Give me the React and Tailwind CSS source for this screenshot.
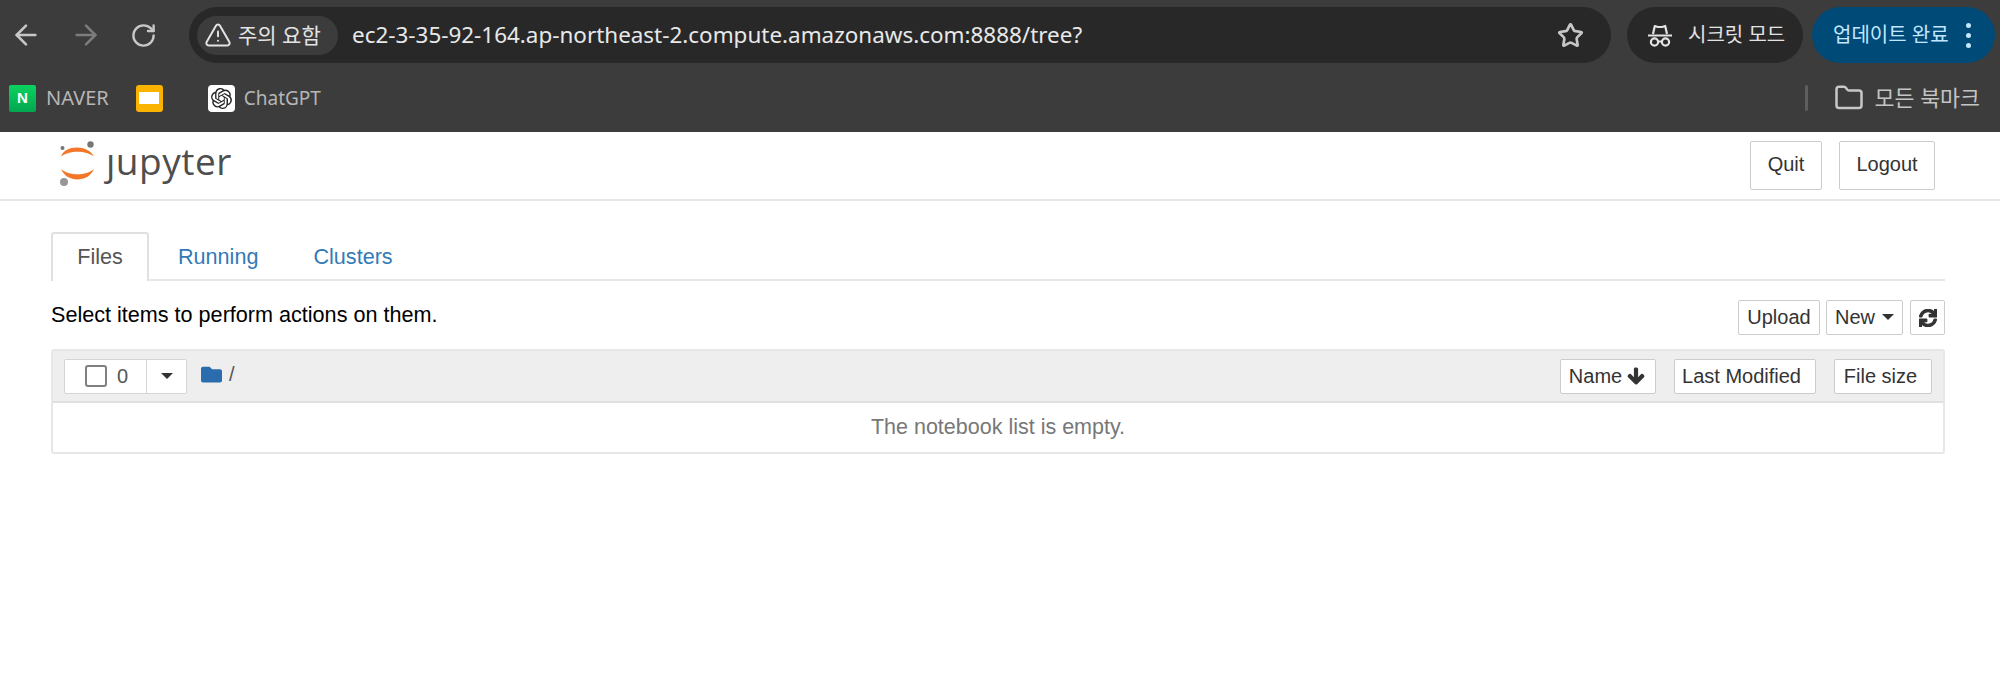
import React from "react";
import { ArrowLeft, ArrowRight, RotateCw, Star, Folder, TriangleAlert } from "lucide-react";
import { FaArrowDown, FaSync, FaFolder } from "react-icons/fa";
import { SiOpenai } from "react-icons/si";

const ui = "font-['Noto_Sans','Noto_Sans_CJK_KR',sans-serif]";
const bs = "font-['Liberation_Sans','Noto_Sans_CJK_KR',sans-serif]";

function Caret({ className = "" }) {
  return <span className={"inline-block w-0 h-0 border-x-[6px] border-x-transparent border-t-[6px] border-t-[#333] " + className} />;
}

function Incognito() {
  return (
    <svg width="26" height="24" viewBox="0 0 26 24" fill="none">
      <path d="M1 11.5h24v2H1z" fill="#e3e3e3" />
      <path d="M6 11 7.8 3l3 1h4.4l3-1L20 11" stroke="#e3e3e3" strokeWidth="2.2" strokeLinejoin="round" />
      <circle cx="7.5" cy="19" r="3.6" stroke="#e3e3e3" strokeWidth="2.2" />
      <circle cx="18.5" cy="19" r="3.6" stroke="#e3e3e3" strokeWidth="2.2" />
      <path d="M11 18.5h4" stroke="#e3e3e3" strokeWidth="2" />
    </svg>
  );
}

function JupyterLogo() {
  return (
    <svg width="38" height="46" viewBox="0 0 38 46" fill="none">
      <path d="M2 16.5C6 4.5 29 4.5 35 16.5C27 10 10 10 2 16.5Z" fill="#f37726" />
      <path d="M2 29C8 43 29 43 35 29C27 36 10 36 2 29Z" fill="#f37726" />
      <circle cx="31.5" cy="4.5" r="3.2" fill="#767677" />
      <circle cx="3.5" cy="8" r="2" fill="#767677" />
      <circle cx="5" cy="42" r="4" fill="#989798" />
    </svg>
  );
}

function Btn({ className = "", children }) {
  return (
    <div className={"flex items-center justify-center bg-white border border-[#ccc] rounded-[2px] text-[#333] " + className}>
      {children}
    </div>
  );
}

export default function App() {
  return (
    <div className="w-[2000px] h-[692px] bg-white overflow-hidden flex flex-col">
      <div className={"h-[132px] bg-[#3c3c3c] flex flex-col shrink-0 " + ui}>
        <div className="h-[70px] flex items-center">
          <div className="flex items-center w-[189px] pl-[10px] gap-[28px] text-[#c7c7c7]">
            <ArrowLeft size={32} strokeWidth={1.9} />
            <ArrowRight size={32} strokeWidth={1.9} className="text-[#7c7c7c]" />
            <RotateCw size={27} strokeWidth={2.1} />
          </div>
          <div className="w-[1422px] h-[56px] rounded-full bg-[#282828] flex items-center pl-[8px] pr-[27px]">
            <div className="w-[141px] h-[39px] rounded-full bg-[#3c3c3c] flex items-center pl-[7px] gap-[6px] text-[#e3e3e3]">
              <TriangleAlert size={28} strokeWidth={1.7} className="shrink-0" />
              <span className="text-[21px] leading-none whitespace-nowrap">주의 요함</span>
            </div>
            <span className="ml-[14px] text-[22.45px] leading-none text-[#e8e8e8] whitespace-nowrap">
              ec2-3-35-92-164.ap-northeast-2.compute.amazonaws.com:8888/tree?
            </span>
            <Star size={27} strokeWidth={2.4} className="ml-auto text-[#c7c7c7]" />
          </div>
          <div className="ml-[16px] w-[176px] h-[56px] rounded-full bg-[#282828] flex items-center pl-[20px] gap-[15px] text-[#e3e3e3]">
            <Incognito />
            <span className="text-[20px] leading-none whitespace-nowrap">시크릿 모드</span>
          </div>
          <div className="ml-[9px] w-[183px] h-[56px] rounded-full bg-[#004a77] flex items-center pl-[21px] text-[#c2e7ff]">
            <span className="text-[20px] leading-none whitespace-nowrap">업데이트 완료</span>
            <span className="ml-[17px] flex flex-col gap-[5px]">
              <span className="w-[5px] h-[5px] rounded-full bg-[#c2e7ff]" />
              <span className="w-[5px] h-[5px] rounded-full bg-[#c2e7ff]" />
              <span className="w-[5px] h-[5px] rounded-full bg-[#c2e7ff]" />
            </span>
          </div>
        </div>
        <div className="flex-1 flex items-center pl-[9px] pb-[6px]">
          <div className="w-[27px] h-[27px] rounded-[2px] bg-gradient-to-b from-[#0bd35f] to-[#03a650] flex items-center justify-center text-white text-[15px] font-black font-['Liberation_Sans',sans-serif]">N</div>
          <span className="ml-[10px] text-[20px] leading-none text-[#b6b6b6]">NAVER</span>
          <div className="ml-[27px] w-[27px] h-[27px] rounded-[3px] bg-[#f9b300] flex items-center justify-center">
            <span className="w-[20px] h-[12px] bg-white" />
          </div>
          <div className="ml-[45px] w-[27px] h-[27px] rounded-[4px] bg-white flex items-center justify-center text-[#222]">
            <SiOpenai size={21} />
          </div>
          <span className="ml-[9px] text-[19px] leading-none text-[#b6b6b6]">ChatGPT</span>
          <div className="ml-auto w-[3px] h-[26px] rounded-full bg-[#5e5e5e]" />
          <Folder size={30} strokeWidth={2} className="ml-[26px] text-[#c7c7c7]" />
          <span className="ml-[11px] mr-[20px] text-[21.7px] leading-none text-[#c4c4c4] whitespace-nowrap">모든 북마크</span>
        </div>
      </div>

      <div className={"flex-1 flex flex-col text-[20px] " + bs}>
        <div className="h-[69px] border-b-[2px] border-[#e7e7e7] flex items-start shrink-0 pl-[59px] pr-[65px]">
          <div className="flex items-center mt-[8px] gap-[9px]">
            <JupyterLogo />
            <span className="font-['Open_Sans',sans-serif] text-[37px] leading-[40px] text-[#4e4e4e] -mt-[4px] tracking-[0.5px]">ȷupyter</span>
          </div>
          <div className="ml-auto flex gap-[17px] mt-[9px] text-[20px]">
            <Btn className="w-[72px] h-[49px] pb-[3px]">Quit</Btn>
            <Btn className="w-[96px] h-[49px] pb-[3px]">Logout</Btn>
          </div>
        </div>

        <div className="ml-[51px] w-[1894px] flex flex-col">
          <div className="mt-[31px] h-[49px] border-b-[2px] border-[#e7e7e7] flex text-[#337ab7] text-[21.6px]">
            <div className="w-[98px] h-[49px] border-x-2 border-t-2 border-[#e0e0e0] rounded-t-[3px] bg-white flex items-center justify-center text-[#555] pb-px">Files</div>
            <div className="ml-[29px] flex items-center pt-[4px]">Running</div>
            <div className="ml-[55px] flex items-center pt-[4px]">Clusters</div>
          </div>

          <div className="mt-[19px] h-[35px] flex items-center">
            <span className="text-black text-[21.6px] -mt-[5px]">Select items to perform actions on them.</span>
            <div className="ml-auto flex items-stretch h-[35px] text-[20px]">
              <Btn className="w-[82px] pb-[2px]">Upload</Btn>
              <Btn className="w-[77px] ml-[6px] gap-[7px] pb-[2px]">New <Caret /></Btn>
              <Btn className="w-[35px] ml-[7px] text-[18px]"><FaSync stroke="currentColor" strokeWidth={30} /></Btn>
            </div>
          </div>

          <div className="mt-[14px] h-[105px] border-2 border-[#e7e7e7] rounded-[3px] flex flex-col text-[20px]">
            <div className="h-[52px] bg-[#eeeeee] border-b-2 border-[#e0e0e0] flex items-center pl-[11px] pr-[11px] shrink-0">
              <div className="flex h-[35px] w-[123px] bg-white border border-[#d5d5d5] rounded-[2px] shrink-0">
                <div className="w-[82px] flex items-center border-r border-[#d5d5d5] pl-[20px] gap-[10px]">
                  <span className="w-[22px] h-[22px] rounded-[3px] border-2 border-[#808080] bg-white shrink-0" />
                  <span className="text-[#555]">0</span>
                </div>
                <div className="flex-1 flex items-center justify-center"><Caret /></div>
              </div>
              <FaFolder className="ml-[14px] -mt-[4px] text-[#2a6cae] text-[21px]" />
              <span className="ml-[7px] -mt-[4px] text-[#555]">/</span>
              <div className="ml-auto flex h-[35px]">
                <Btn className="w-[96px] gap-[5px] pr-[2px]">Name <FaArrowDown className="text-[18px]" stroke="currentColor" strokeWidth={40} /></Btn>
                <Btn className="w-[142px] ml-[18px] pr-[7px]">Last Modified</Btn>
                <Btn className="w-[98px] ml-[18px] pr-[5px]">File size</Btn>
              </div>
            </div>
            <div className="flex-1 flex items-center justify-center text-[#777] text-[21.5px]">The notebook list is empty.</div>
          </div>
        </div>
      </div>
    </div>
  );
}
